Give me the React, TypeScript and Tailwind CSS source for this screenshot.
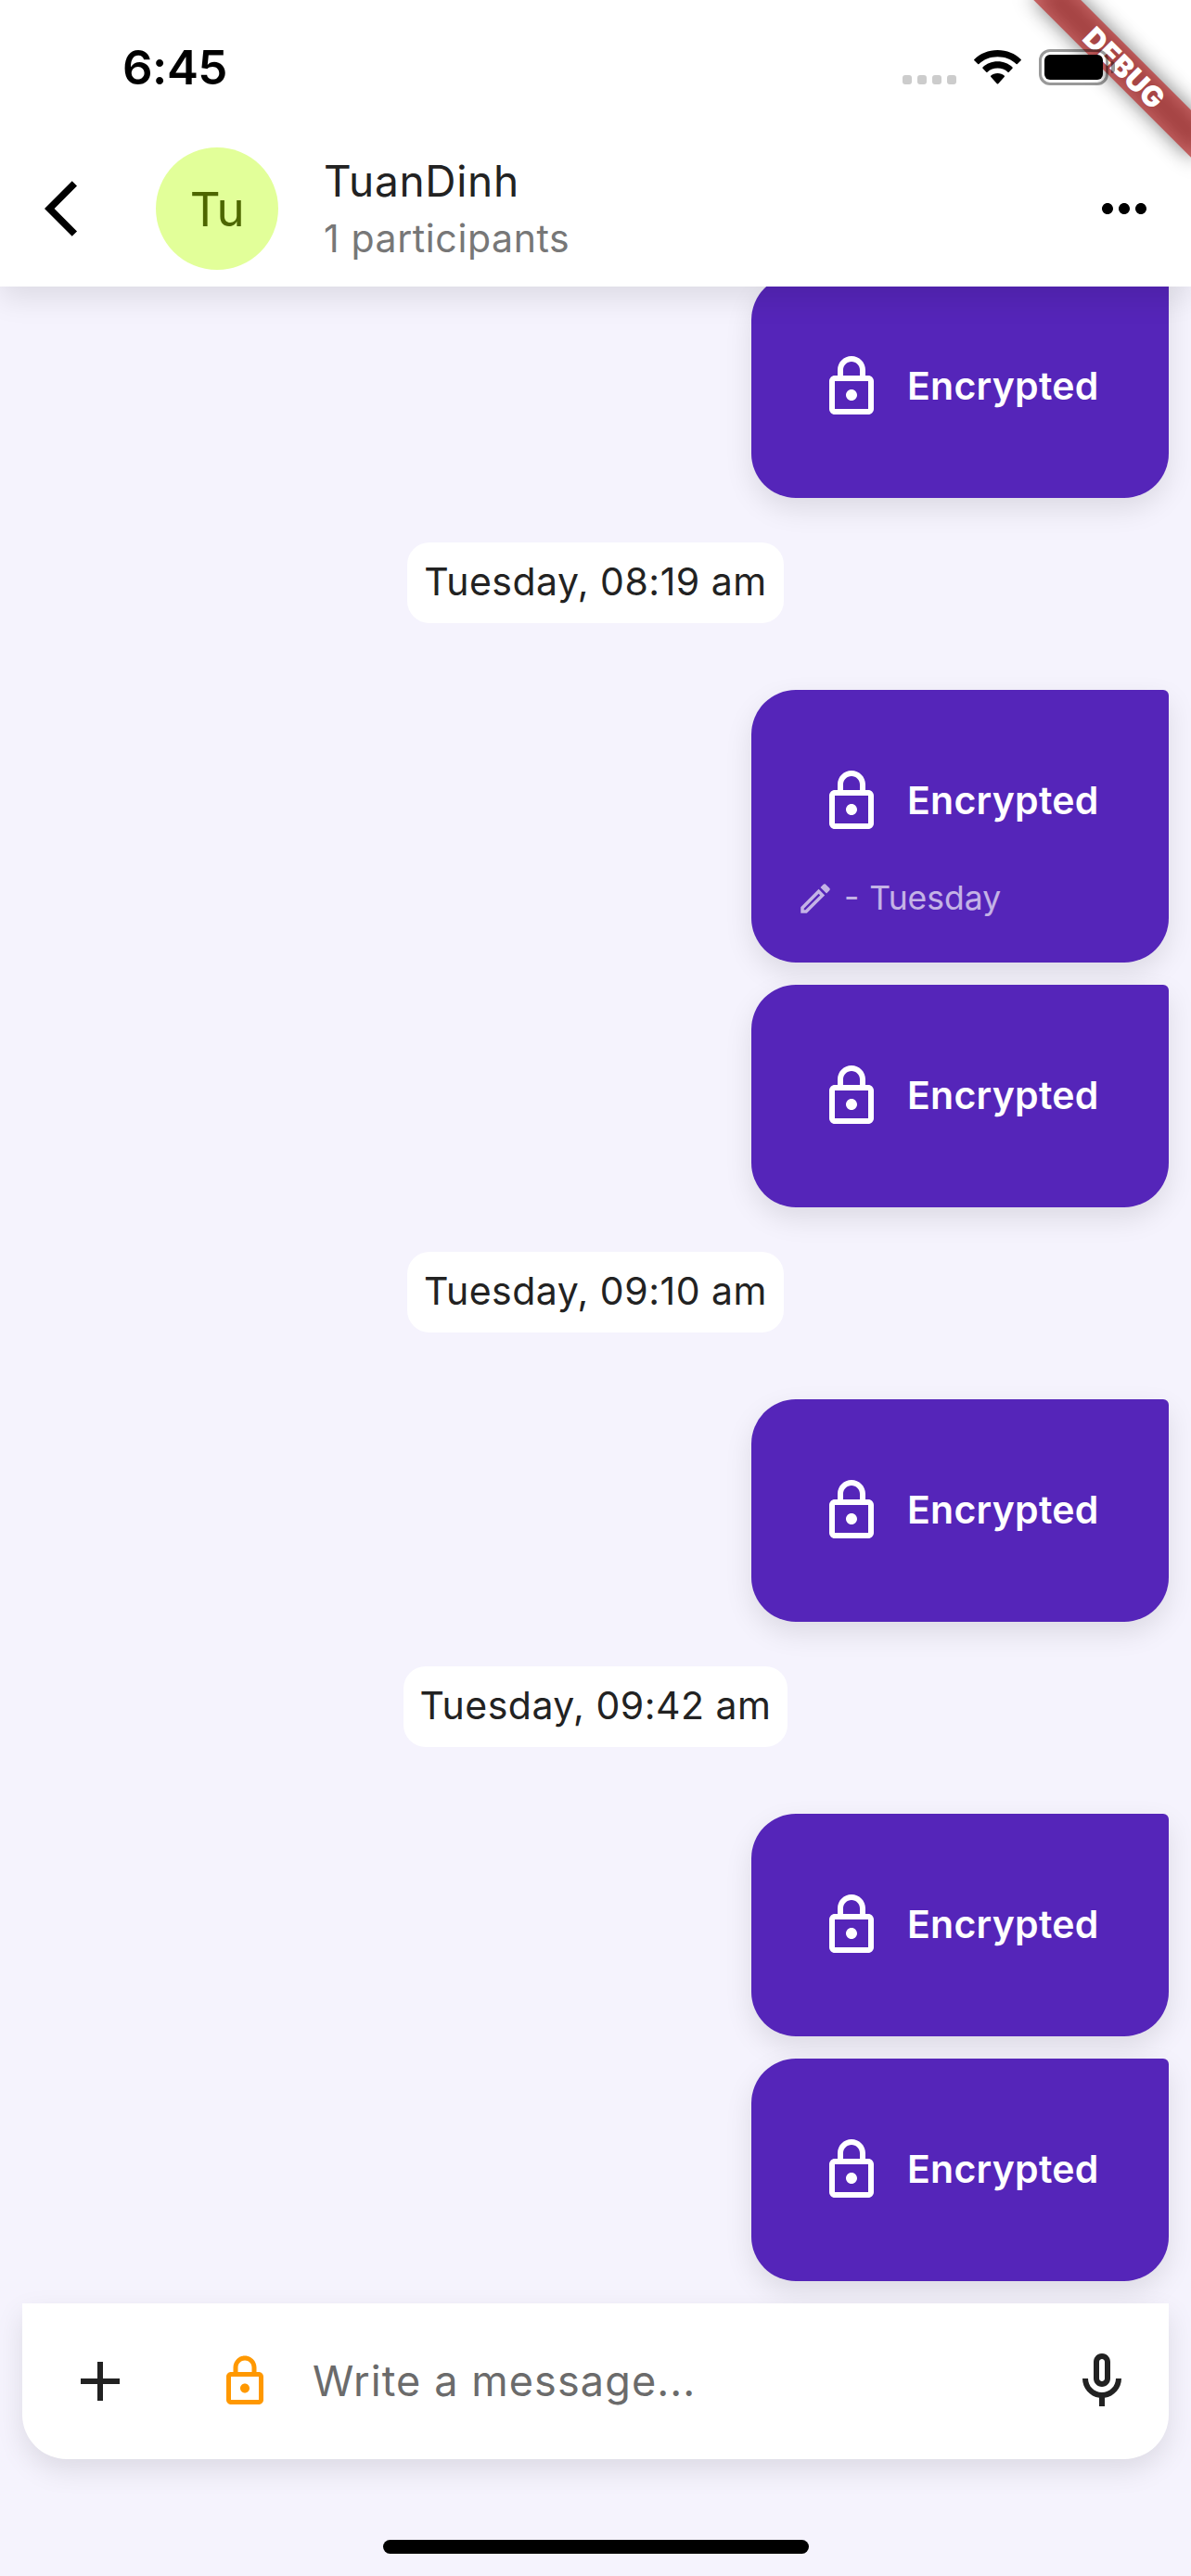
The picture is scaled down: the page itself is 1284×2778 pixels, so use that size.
import type { ReactNode } from "react";

const LOCK =
  "M12 17c1.1 0 2-.9 2-2s-.9-2-2-2-2 .9-2 2 .9 2 2 2zm6-9h-1V6c0-2.76-2.24-5-5-5S7 3.24 7 6v2H6c-1.1 0-2 .9-2 2v10c0 1.1.9 2 2 2h12c1.1 0 2-.9 2-2V10c0-1.1-.9-2-2-2zM9 6c0-1.66 1.34-3 3-3s3 1.34 3 3v2H9V6zm9 14H6V10h12v10z";
const MIC =
  "M12 14c1.66 0 3-1.34 3-3V5c0-1.66-1.34-3-3-3S9 3.34 9 5v6c0 1.66 1.34 3 3 3zm-1-9c0-.55.45-1 1-1s1 .45 1 1v6c0 .55-.45 1-1 1s-1-.45-1-1V5zm6 6c0 2.76-2.24 5-5 5s-5-2.24-5-5H5c0 3.53 2.61 6.43 6 6.92V21h2v-3.08c3.39-.49 6-3.39 6-6.92h-2z";
const PENCIL =
  "M14.06 9.02l.92.92L5.92 19H5v-.92l9.06-9.06M17.66 3c-.25 0-.51.1-.7.29l-1.83 1.83 3.75 3.75 1.83-1.83c.39-.39.39-1.02 0-1.41l-2.34-2.34c-.2-.2-.45-.29-.71-.29zm-3.6 3.19L3 17.25V21h3.75L17.81 9.94l-3.75-3.75z";
const BACK = "M11.67 3.87L9.9 2.1 0 12l9.9 9.9 1.77-1.77L3.54 12z";
const MORE =
  "M6 10c-1.1 0-2 .9-2 2s.9 2 2 2 2-.9 2-2-.9-2-2-2zm12 0c-1.1 0-2 .9-2 2s.9 2 2 2 2-.9 2-2-.9-2-2-2zm-6 0c-1.1 0-2 .9-2 2s.9 2 2 2 2-.9 2-2-.9-2-2-2z";
const PLUS = "M19 13h-6v6h-2v-6H5v-2h6V5h2v6h6v2z";

function Icon({ d, className }: { d: string; className: string }) {
  return (
    <svg viewBox="0 0 24 24" fill="currentColor" className={`shrink-0 ${className}`}>
      <path d={d} />
    </svg>
  );
}

function StatusBar() {
  return (
    <div className="flex h-[141px] items-start justify-between pl-[132px] pr-[82px] pt-[53px] text-black">
      <span className="mt-[-10px] text-[51px] leading-[60px] font-semibold tracking-[-0.5px]">6:45</span>
      <div className="flex items-start">
        <div className="mt-[28px] mr-[19px] flex gap-[6px]">
          {[0, 1, 2, 3].map((i) => (
            <span key={i} className="size-[10px] rounded-[3px] bg-[#cccccc]" />
          ))}
        </div>
        <svg viewBox="0 0 51 38" className="mt-px mr-[19px] h-[38px] w-[51px]">
          <path d="M25.5 0C35.500 0 44.300 3.700 50.600 10Q51.200 10.700 50.600 11.300L46.800 15Q46.200 15.500 45.600 15C40.300 10 33.300 7.300 25.500 7.300S10.700 10 5.400 15Q4.800 15.500 4.200 15L.4 11.300Q-.2 10.700 .4 10C6.700 3.700 15.500 0 25.500 0z" />
          <path d="M25.500 12.300C31.900 12.300 37.500 14.700 41.500 18.500Q42.100 19.200 41.500 19.800L37.700 23.700Q37.100 24.200 36.500 23.700C33.500 21 29.700 19.600 25.500 19.600S17.500 21 14.500 23.700Q13.900 24.200 13.300 23.700L9.500 19.800Q8.900 19.200 9.500 18.500C13.500 14.700 19.100 12.300 25.500 12.300z" />
          <path d="M25.500 25C28.400 25 30.900 26.100 32.700 27.600Q33.400 28.300 32.700 29L26.200 36.200Q25.500 37 24.800 36.200L18.300 29Q17.600 28.300 18.300 27.600C20.100 26.100 22.600 25 25.500 25z" />
        </svg>
        <div className="flex items-center">
          <div className="h-[39px] w-[75px] rounded-[12px] border-[3px] border-black/40 p-[3px]">
            <div className="h-full w-full rounded-[6px] bg-black" />
          </div>
          <div className="ml-[3px] h-[13px] w-[4px] rounded-r-full bg-black/40" />
        </div>
      </div>
    </div>
  );
}

function DebugBanner() {
  return (
    <div className="pointer-events-none absolute top-0 right-0 z-20 size-[240px] overflow-hidden">
      <div className="absolute top-0 left-full h-0 w-0 rotate-45">
        <div className="absolute top-[84px] left-[-120px] h-[36px] w-[240px] bg-black/50 blur-[11px]" />
        <div className="absolute top-[84px] left-[-120px] flex h-[36px] w-[240px] items-center justify-center bg-[#b71c1c]/63 pl-[2px] text-[31px] leading-none font-black tracking-[0.2px] text-white">
          DEBUG
        </div>
      </div>
    </div>
  );
}

function Header() {
  return (
    <header className="relative z-10 flex h-[309px] shrink-0 flex-col bg-white pt-[141px] shadow-[0_12px_30px_rgba(0,0,0,0.1)]">
      <div className="flex h-[168px] items-center pr-[36px] pl-[48px]">
        <Icon d={BACK} className="size-[72px] text-black" />
        <div className="ml-[48px] flex size-[132px] items-center justify-center rounded-full bg-[#e2ff99] pt-[3px] text-[51px] tracking-[-0.5px] text-[#4d6600]">
          Tu
        </div>
        <div className="ml-[49px] flex flex-1 flex-col pt-[2px]">
          <span className="text-[46px] leading-[60px] tracking-[0.7px] text-[#222222]">TuanDinh</span>
          <span className="mt-[2px] text-[41px] leading-[60px] tracking-[0.6px] text-[#777777]">1 participants</span>
        </div>
        <Icon d={MORE} className="size-[72px] text-black" />
      </div>
    </header>
  );
}

function Bubble({ className = "", edited }: { className?: string; edited?: string }) {
  return (
    <div
      className={`flex w-[450px] shrink-0 flex-col self-end rounded-[48px] rounded-tr-[6px] bg-[#5525b9] px-[48px] shadow-[0_12px_30px_rgba(0,0,0,0.1)] ${className}`}
    >
      <div className={`flex items-center pt-[84px] pl-[24px] ${edited ? "" : "pb-[84px]"}`}>
        <Icon d={LOCK} className="size-[72px] text-white" />
        <span className="mb-[2px] ml-[24px] text-[41px] leading-[60px] font-semibold tracking-[0.25px] text-white">
          Encrypted
        </span>
      </div>
      {edited && (
        <div className="my-[48px] flex h-[42px] items-center text-white/65">
          <Icon d={PENCIL} className="size-[42px]" />
          <span className="ml-[10px] text-[35.5px] leading-[40px] [word-spacing:1px]">- {edited}</span>
        </div>
      )}
    </div>
  );
}

function TimeChip({ children }: { children: ReactNode }) {
  return (
    <div className="mt-[48px] mb-[72px] flex h-[87px] shrink-0 items-center self-center rounded-[24px] bg-white px-[18px] pb-[2px] text-[41px] tracking-[0.5px] text-[#222222]">
      {children}
    </div>
  );
}

function Composer() {
  return (
    <footer className="flex h-[294px] shrink-0 flex-col items-center px-[24px]">
      <div className="flex h-[168px] w-full items-center rounded-b-[48px] bg-white pr-[36px] pl-[48px] shadow-[0_12px_30px_rgba(0,0,0,0.1)]">
        <Icon d={PLUS} className="size-[72px] text-[#222222]" />
        <Icon d={LOCK} className="ml-[90px] size-[60px] text-[#ff9800]" />
        <span className="ml-[43px] flex-1 text-[45px] leading-[60px] tracking-[1.1px] text-[#6b6b6b]">
          Write a message...
        </span>
        <Icon d={MIC} className="size-[72px] text-[#222222]" />
      </div>
      <div className="mt-[87px] ml-px h-[15px] w-[459px] rounded-full bg-black" />
    </footer>
  );
}

export default function App() {
  return (
    <div className="relative flex h-[2778px] w-[1284px] flex-col overflow-hidden bg-[#f5f3fd] font-['Inter',sans-serif]">
      <Header />
      <DebugBanner />
      {/* The system status bar is drawn above the app and its debug ribbon. */}
      <div className="absolute inset-x-0 top-0 z-30">
        <StatusBar />
      </div>
      <main className="flex min-h-0 flex-1 flex-col justify-end overflow-hidden px-[24px] pb-[24px]">
        <Bubble />
        <TimeChip>Tuesday, 08:19 am</TimeChip>
        <Bubble edited="Tuesday" />
        <Bubble className="mt-[24px]" />
        <TimeChip>Tuesday, 09:10 am</TimeChip>
        <Bubble />
        <TimeChip>Tuesday, 09:42 am</TimeChip>
        <Bubble />
        <Bubble className="mt-[24px]" />
      </main>
      <Composer />
    </div>
  );
}
